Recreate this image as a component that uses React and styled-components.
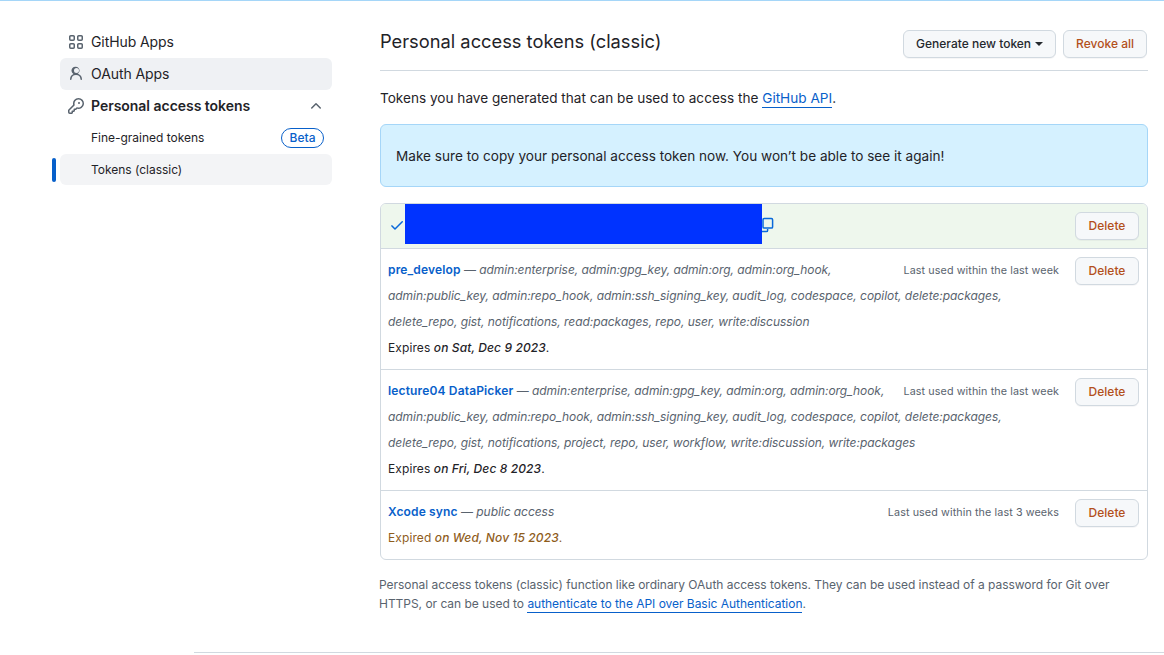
import React from "react";
import styled, { createGlobalStyle } from "styled-components";

const Global = createGlobalStyle`
  html, body { margin: 0; padding: 0; background: #fff; }
  body { font-family: Inter, "Liberation Sans", sans-serif; color: #1f2328; font-size: 14px; overflow: hidden; }
  a { text-decoration: none; }
`;

const Page = styled.div`
  width: 1164px; height: 655px; border-top: 1px solid #a5d6f8; box-sizing: border-box; overflow: hidden;
`;
const Layout = styled.div`
  display: flex; height: 651px; box-sizing: border-box; padding: 25px 16px 0 60px; gap: 48px;
`;
const Side = styled.nav`
  width: 272px; flex: none; display: flex; flex-direction: column;
`;
const NavItem = styled.div`
  position: relative; height: 32px; box-sizing: border-box; border-radius: 6px; display: flex; align-items: center;
  padding: 0 8px 2px; gap: 7px; font-size: 14px; color: #1f2328;
  letter-spacing: ${p => p.$bold ? "-0.03px" : "-0.09px"};
  background: ${p => p.$bg || "transparent"};
  font-weight: ${p => p.$bold ? 600 : 400};
`;
const SubItem = styled(NavItem)`
  font-size: 12px; padding-left: 31px; justify-content: space-between; letter-spacing: -0.02px;
  height: ${p => p.$h || 32}px; padding-bottom: ${p => p.$pb ?? 2}px;
`;
const IconWrap = styled.span`
  width: 16px; height: 16px; display: flex; flex: none; color: #59636e; margin-top: 2px;
`;
const Chevron = styled.span`
  margin-left: auto; width: 16px; height: 16px; display: flex; color: #59636e; margin-top: 2px;
`;
const Marker = styled.span`
  position: absolute; left: -8px; top: 4px; width: 4px; height: 24px; border-radius: 6px; background: #0860ca;
`;
const Beta = styled.span`
  border: 1px solid #0860ca; color: #0860ca; border-radius: 10px; font-size: 12px; font-weight: 500;
  height: 18px; line-height: 18px; padding: 0 7.5px; margin-top: 2px; letter-spacing: 0;
`;
const Main = styled.main`
  width: 768px; flex: none; display: flex; flex-direction: column; margin-top: 4px;
`;
const Head = styled.header`
  display: flex; justify-content: space-between; align-items: flex-start; height: 40px; border-bottom: 1px solid #d1d9e0;
`;
const Title = styled.h2`
  margin: 0; font-size: 18.3px; font-weight: 400; line-height: 22px; color: #1f2328;
`;
const Actions = styled.div`
  display: flex; gap: 7px; padding-right: 1px;
`;
const Btn = styled.button`
  font-family: inherit; height: 28px; box-sizing: border-box; padding: 0 12px 2px; font-size: 12px; font-weight: 500;
  border: 1px solid #d1d9e0; border-radius: 6px; background: #f6f8fa; cursor: pointer;
  color: ${p => p.$danger ? "#b3501a" : "#25292e"}; display: inline-flex; align-items: center; gap: 4px;
  box-shadow: 0 1px 0 rgba(31,35,40,.04); flex: none;
`;
const Caret = styled.span`
  width: 0; height: 0; border-left: 4px solid transparent; border-right: 4px solid transparent; border-top: 4px solid #25292e; margin-top: 2px;
`;
const Lead = styled.p`
  margin: 0; height: 53px; box-sizing: border-box; padding-top: 17px; font-size: 13.6px; line-height: 20px; color: #1f2328;
`;
const Link = styled.a`
  color: #0860ca; border-bottom: 1px solid #0860ca; padding-bottom: 1px;
`;
const Flash = styled.div`
  height: 63px; box-sizing: border-box; background: #d5f1ff; border: 1px solid #a5d6f8; border-radius: 6px;
  padding: 0 15px; display: flex; align-items: center; font-size: 13.6px; color: #1f2328;
`;
const Box = styled.div`
  margin-top: 16px; border: 1px solid #d1d9e0; border-radius: 6px; overflow: hidden;
`;
const NewRow = styled.div`
  height: 44px; box-sizing: border-box; background: #eef7ed; display: flex; align-items: flex-start; padding: 0 8px;
`;
const CheckWrap = styled.span`
  width: 16px; height: 16px; margin-top: 13px; flex: none; color: #0969da; display: flex;
`;
const Redacted = styled.div`
  width: 357px; height: 40px; background: #0033ff; flex: none;
`;
const CopyWrap = styled.span`
  width: 14px; height: 16px; margin-top: 13px; flex: none; color: #0969da; display: flex;
`;
const Spacer = styled.div`flex: 1;`;
const DelBtn = styled(Btn)`
  width: 64px; justify-content: center; padding: 0 0 2px; margin-top: ${p => p.$mt ?? 8}px; color: #b3501a; flex: none;
`;
const Row = styled.div`
  border-top: 1px solid #d1d9e0; padding: 8px 8px 8px 7px; display: flex; align-items: flex-start; justify-content: space-between;
`;
const Info = styled.div`
  width: 673px; font-size: 12px; line-height: 26px; color: #59636e; height: ${p => p.$h}px; position: relative; letter-spacing: -0.05px;
`;
const Line = styled.div`
  white-space: nowrap; font-style: italic; color: #59636e;
`;
const Name = styled.a`
  color: #0860ca; font-weight: 600; font-style: normal; letter-spacing: 0.15px;
`;
const Dash = styled.span`font-style: normal;`;
const Exp = styled.div`
  white-space: nowrap; letter-spacing: 0.1px; color: ${p => p.$warn ? "#8f5d1c" : "#1f2328"};
`;
const ExpDate = styled.em`font-weight: 500;`;
const LastUsed = styled.span`
  position: absolute; right: 2px; top: 1px; font-size: 10.75px; font-style: normal; color: #59636e; letter-spacing: 0.1px; background: #fff; padding-left: 8px;
`;
const Note = styled.p`
  margin: 15px 0 0; font-size: 12px; line-height: 19px; color: #59636e; margin-left: -1px; white-space: nowrap; letter-spacing: -0.03px;
`;
const FootLine = styled.div`
  position: absolute; left: 194px; right: 0; top: 652px; height: 1px; background: #d1d9e0;
`;

const Key = () => (
  <svg viewBox="0 0 16 16" width="16" height="16" fill="currentColor"><path d="M10.5 0a5.499 5.499 0 1 1-1.288 10.848l-.932.932a.749.749 0 0 1-.53.22H7v.75a.749.749 0 0 1-.22.53l-.5.5a.749.749 0 0 1-.53.22H5v.75a.749.749 0 0 1-.22.53l-.5.5a.749.749 0 0 1-.53.22h-2A1.75 1.75 0 0 1 0 14.25v-2c0-.199.079-.389.22-.53l4.932-4.932A5.5 5.5 0 0 1 10.5 0Zm-4 5.5c-.001.431.069.86.205 1.269a.75.75 0 0 1-.181.768L1.5 12.56v1.69c0 .138.112.25.25.25h1.69l.06-.06v-1.19a.75.75 0 0 1 .75-.75h1.19l.06-.06v-1.19a.75.75 0 0 1 .75-.75h1.19l1.023-1.025a.75.75 0 0 1 .768-.18A4 4 0 1 0 6.5 5.5ZM11 6a1 1 0 1 1 0-2 1 1 0 0 1 0 2Z"/></svg>
);
const Apps = () => (
  <svg viewBox="0 0 16 16" width="16" height="16" fill="currentColor"><path d="M1 2.75C1 1.784 1.784 1 2.75 1h2.5C6.216 1 7 1.784 7 2.75v2.5A1.75 1.75 0 0 1 5.25 7h-2.5A1.75 1.75 0 0 1 1 5.25Zm1.75-.25a.25.25 0 0 0-.25.25v2.5c0 .138.112.25.25.25h2.5a.25.25 0 0 0 .25-.25v-2.5a.25.25 0 0 0-.25-.25ZM9 2.75C9 1.784 9.784 1 10.75 1h2.5C14.216 1 15 1.784 15 2.75v2.5A1.75 1.75 0 0 1 13.25 7h-2.5A1.75 1.75 0 0 1 9 5.25Zm1.75-.25a.25.25 0 0 0-.25.25v2.5c0 .138.112.25.25.25h2.5a.25.25 0 0 0 .25-.25v-2.5a.25.25 0 0 0-.25-.25ZM1 10.75C1 9.784 1.784 9 2.75 9h2.5C6.216 9 7 9.784 7 10.75v2.5A1.75 1.75 0 0 1 5.25 15h-2.5A1.75 1.75 0 0 1 1 13.25Zm1.75-.25a.25.25 0 0 0-.25.25v2.5c0 .138.112.25.25.25h2.5a.25.25 0 0 0 .25-.25v-2.5a.25.25 0 0 0-.25-.25ZM9 10.75C9 9.784 9.784 9 10.75 9h2.5c.966 0 1.75.784 1.75 1.75v2.5A1.75 1.75 0 0 1 13.25 15h-2.5A1.75 1.75 0 0 1 9 13.25Zm1.75-.25a.25.25 0 0 0-.25.25v2.5c0 .138.112.25.25.25h2.5a.25.25 0 0 0 .25-.25v-2.5a.25.25 0 0 0-.25-.25Z"/></svg>
);
const Person = () => (
  <svg viewBox="0 0 16 16" width="16" height="16" fill="currentColor"><path d="M10.561 8.073a6.005 6.005 0 0 1 3.432 5.142.75.75 0 1 1-1.498.07 4.5 4.5 0 0 0-8.99 0 .75.75 0 0 1-1.498-.07 6.004 6.004 0 0 1 3.431-5.142 3.999 3.999 0 1 1 4.123 0ZM11 4.5a2.5 2.5 0 1 0-5 0 2.5 2.5 0 0 0 5 0Z"/></svg>
);
const Up = () => (
  <svg viewBox="0 0 16 16" width="16" height="16" fill="currentColor"><path d="M3.22 10.53a.749.749 0 0 1 0-1.06l4.25-4.25a.749.749 0 0 1 1.06 0l4.25 4.25a.749.749 0 1 1-1.06 1.06L8 6.811 4.28 10.53a.749.749 0 0 1-1.06 0Z"/></svg>
);
const Check = () => (
  <svg viewBox="0 0 16 16" width="16" height="16" fill="currentColor"><path d="M13.78 4.22a.75.75 0 0 1 0 1.06l-7.25 7.25a.75.75 0 0 1-1.06 0L2.22 9.28a.751.751 0 0 1 1.042-1.018.751.751 0 0 1 .018.018l2.72 2.72 6.72-6.72a.75.75 0 0 1 1.06 0Z"/></svg>
);
const Copy = () => (
  <svg viewBox="0 0 14 16" width="14" height="16" fill="none" stroke="currentColor" strokeWidth="1.5"><rect x="1" y="1.5" width="9.6" height="9.6" rx="1.2"/><path d="M0 14.6h4.4c.8 0 1.2-.5 1.2-1.2V12"/></svg>
);

export default function App() {
  return (
    <Page>
      <Global />
      <Layout>
        <Side>
          <NavItem><IconWrap><Apps /></IconWrap>GitHub Apps</NavItem>
          <NavItem $bg="#eff1f4"><IconWrap><Person /></IconWrap>OAuth Apps</NavItem>
          <NavItem $bold><IconWrap><Key /></IconWrap>Personal access tokens<Chevron><Up /></Chevron></NavItem>
          <SubItem>Fine-grained tokens<Beta>Beta</Beta></SubItem>
          <SubItem $bg="#f3f4f6" $h={31} $pb={0}><Marker />Tokens (classic)</SubItem>
        </Side>
        <Main>
          <Head>
            <Title>Personal access tokens (classic)</Title>
            <Actions>
              <Btn>Generate new token <Caret /></Btn>
              <Btn $danger>Revoke all</Btn>
            </Actions>
          </Head>
          <Lead>Tokens you have generated that can be used to access the <Link>GitHub API</Link>.</Lead>
          <Flash>Make sure to copy your personal access token now. You won’t be able to see it again!</Flash>
          <Box>
            <NewRow>
              <CheckWrap><Check /></CheckWrap>
              <Redacted />
              <CopyWrap><Copy /></CopyWrap>
              <Spacer />
              <DelBtn>Delete</DelBtn>
            </NewRow>
            <Row>
              <Info $h={104}>
                <Line><Name>pre_develop</Name> <Dash>—</Dash> admin:enterprise, admin:gpg_key, admin:org, admin:org_hook,</Line>
                <Line>admin:public_key, admin:repo_hook, admin:ssh_signing_key, audit_log, codespace, copilot, delete:packages,</Line>
                <Line>delete_repo, gist, notifications, read:packages, repo, user, write:discussion</Line>
                <Exp>Expires <ExpDate>on Sat, Dec 9 2023</ExpDate>.</Exp>
                <LastUsed>Last used within the last week</LastUsed>
              </Info>
              <DelBtn $mt={0}>Delete</DelBtn>
            </Row>
            <Row>
              <Info $h={104}>
                <Line><Name>lecture04 DataPicker</Name> <Dash>—</Dash> admin:enterprise, admin:gpg_key, admin:org, admin:org_hook,</Line>
                <Line>admin:public_key, admin:repo_hook, admin:ssh_signing_key, audit_log, codespace, copilot, delete:packages,</Line>
                <Line>delete_repo, gist, notifications, project, repo, user, workflow, write:discussion, write:packages</Line>
                <Exp>Expires <ExpDate>on Fri, Dec 8 2023</ExpDate>.</Exp>
                <LastUsed>Last used within the last week</LastUsed>
              </Info>
              <DelBtn $mt={0}>Delete</DelBtn>
            </Row>
            <Row>
              <Info $h={52}>
                <Line><Name>Xcode sync</Name> <Dash>—</Dash> public access</Line>
                <Exp $warn>Expired <ExpDate>on Wed, Nov 15 2023</ExpDate>.</Exp>
                <LastUsed>Last used within the last 3 weeks</LastUsed>
              </Info>
              <DelBtn $mt={0}>Delete</DelBtn>
            </Row>
          </Box>
          <Note>
            Personal access tokens (classic) function like ordinary OAuth access tokens. They can be used instead of a password for Git over<br />
            HTTPS, or can be used to <Link>authenticate to the API over Basic Authentication</Link>.
          </Note>
        </Main>
      </Layout>
      <FootLine />
    </Page>
  );
}
